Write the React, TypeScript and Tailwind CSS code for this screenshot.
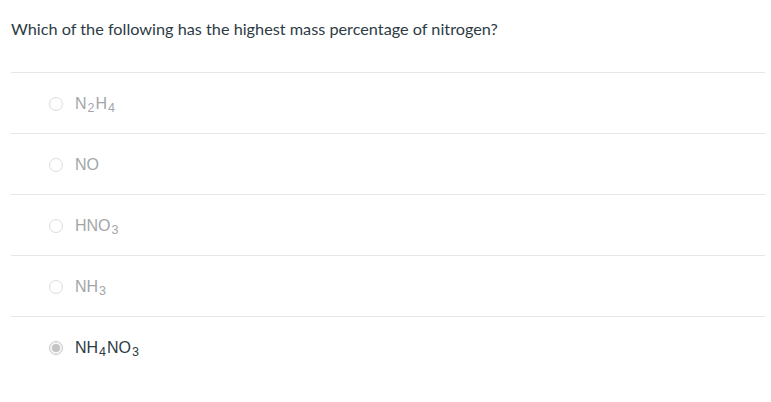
const options = [
  { id: 'a', parts: [['N'], ['2', true], ['H'], ['4', true]] },
  { id: 'b', parts: [['NO']] },
  { id: 'c', parts: [['HNO'], ['3', true]] },
  { id: 'd', parts: [['NH'], ['3', true]] },
  { id: 'e', parts: [['NH'], ['4', true], ['NO'], ['3', true]], selected: true },
] as { id: string; parts: [string, boolean?][]; selected?: boolean }[];

function Formula({ parts }: { parts: [string, boolean?][] }) {
  return (
    <span>
      {parts.map(([t, sub], i) =>
        sub ? (
          <sub key={i} className="text-[12.5px] bottom-[-3px] mx-[1px]">{t}</sub>
        ) : (
          <span key={i}>{t}</span>
        ),
      )}
    </span>
  );
}

export default function App() {
  return (
    <div className="w-[771px] h-[402px] bg-white pl-[11px] pr-[6px]">
      <p className="pt-[17px] pb-[31px] text-[16.25px] leading-[24px] text-[#2d3b45] font-['Lato',sans-serif]">
        Which of the following has the highest mass percentage of nitrogen?
      </p>
      <div>
        {options.map((o) => (
          <div key={o.id} className="h-[61px] border-t border-[#e6e6e6] flex items-center pl-[38px] pt-[2px]">
            <span
              className={`w-[14px] h-[14px] rounded-full border flex items-center justify-center ${
                o.selected ? 'border-[#c8c8c8] bg-[#f4f4f4]' : 'border-[#dcdcdc] bg-white'
              }`}
            >
              {o.selected && <span className="w-[8px] h-[8px] rounded-full bg-[#c4c4c4]" />}
            </span>
            <span
              className={`ml-[12px] text-[16px] font-['Liberation_Sans',Arial,sans-serif] ${
                o.selected ? 'text-[#2d3b45]' : 'text-[#a3a6a9]'
              }`}
            >
              <Formula parts={o.parts} />
            </span>
          </div>
        ))}
      </div>
    </div>
  );
}
